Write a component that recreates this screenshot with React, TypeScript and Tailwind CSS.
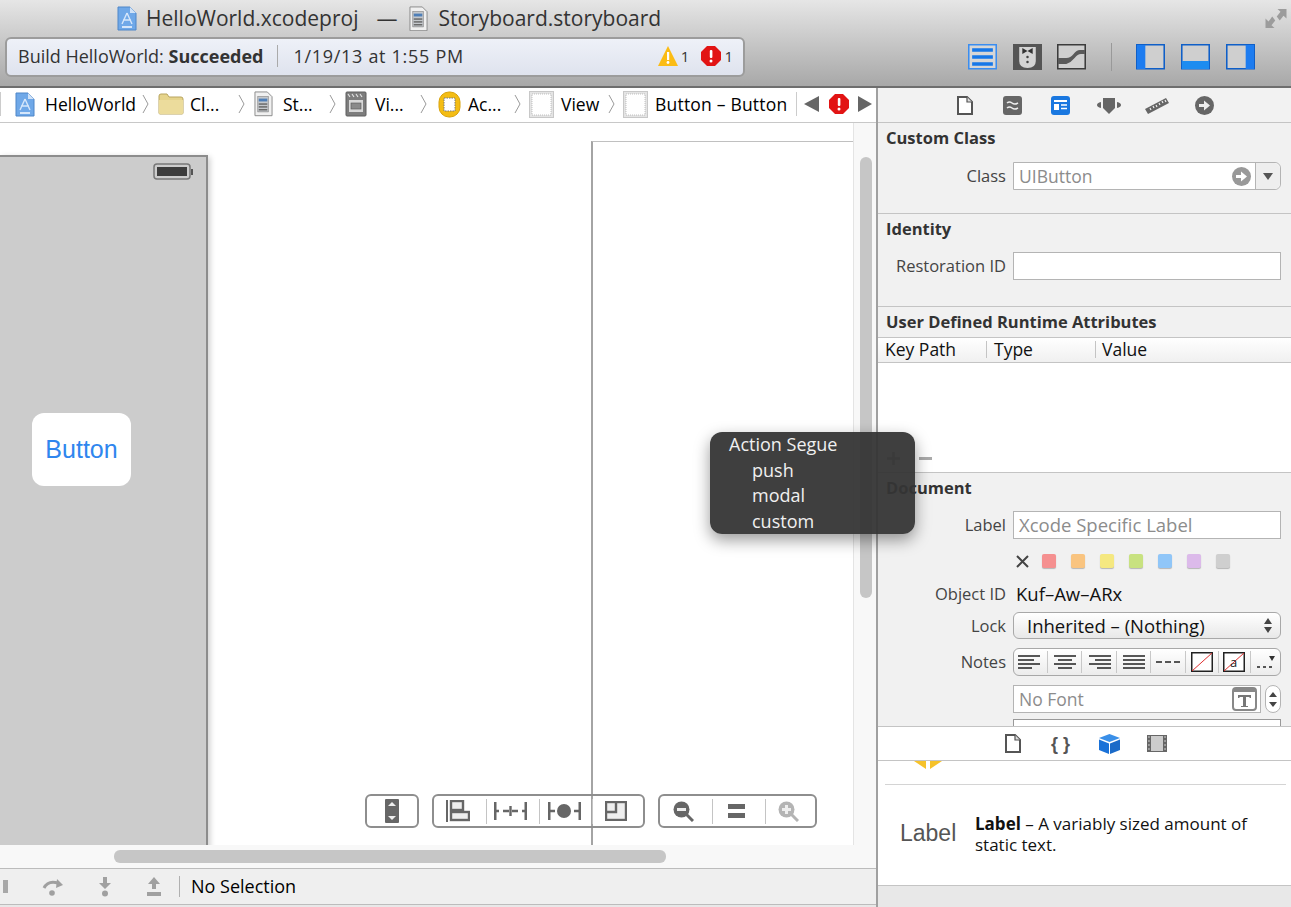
import React from "react"

// --- file type icons ---
function ProjIcon({ size = 20 }: { size?: number }) {
  return (
    <svg width={size} height={size * 1.25} viewBox="0 0 20 25" className="shrink-0">
      <path d="M1 1h12l6 6v17H1z" fill="#6fa8e8" stroke="#4f86c8" />
      <path d="M13 1v6h6z" fill="#cfe2f8" />
      <path d="M10 7l5 11M10 7l-5 11M6 14h8" stroke="#d5e6fa" strokeWidth="1.4" fill="none" />
      <rect x="5" y="20" width="10" height="2" fill="#d5e6fa" />
    </svg>
  )
}

function BoardIcon({ size = 20 }: { size?: number }) {
  return (
    <svg width={size} height={size * 1.35} viewBox="0 0 20 27" className="shrink-0">
      <path d="M1 1h13l5 5v20H1z" fill="#f0f0f0" stroke="#8a8a8a" />
      <rect x="4" y="6" width="11" height="16" fill="#c4c8cc" stroke="#777" strokeWidth=".6" />
      <rect x="5" y="8" width="9" height="3" fill="#4f7fb8" />
      <rect x="5" y="13" width="9" height="1.5" fill="#666" />
      <rect x="5" y="16" width="9" height="1.5" fill="#666" />
      <rect x="5" y="19" width="9" height="1.5" fill="#666" />
    </svg>
  )
}

function FolderIcon() {
  return (
    <svg width="26" height="22" viewBox="0 0 26 22" className="shrink-0">
      <path d="M1 5V3q0-2 2-2h6l2 3h12q2 0 2 2v14q0 1-1 1H2q-1 0-1-1z" fill="#e6d48c" stroke="#b8a45e" />
      <path d="M1 7h24v13q0 1-1 1H2q-1 0-1-1z" fill="#ecdc9c" />
    </svg>
  )
}

function SceneIcon() {
  return (
    <svg width="22" height="26" viewBox="0 0 22 26" className="shrink-0">
      <rect x="1" y="1" width="20" height="24" rx="1" fill="#7d7d7d" stroke="#5f5f5f" />
      <path d="M3 3l2 3M7 3l2 3M11 3l2 3M15 3l2 3" stroke="#e2e2e2" strokeWidth="1.2" />
      <rect x="4" y="9" width="14" height="12" fill="#d8d8d8" />
      <rect x="6" y="12" width="10" height="6" fill="#8a8a8a" stroke="#555" strokeWidth=".6" />
    </svg>
  )
}

function ControllerIcon() {
  return (
    <svg width="23" height="27" viewBox="0 0 23 27" className="shrink-0">
      <rect x="1" y="1" width="21" height="25" rx="10" fill="#f4bd14" stroke="#d9a30c" />
      <rect x="6" y="7" width="11" height="13" fill="#fff" stroke="#777" strokeDasharray="1.5 1" />
    </svg>
  )
}

function ViewIcon() {
  return (
    <svg width="25" height="27" viewBox="0 0 25 27" className="shrink-0">
      <rect x=".5" y=".5" width="24" height="26" fill="#e4e4e4" stroke="#c8c8c8" />
      <rect x="3" y="3" width="19" height="21" fill="#fff" stroke="#aaa" strokeWidth=".7" strokeDasharray="1 1" />
    </svg>
  )
}

function Chevron() {
  return (
    <svg width="7" height="20" viewBox="0 0 7 20" className="shrink-0">
      <path d="M1 1l5 9-5 9" stroke="#9a9a9a" fill="none" />
    </svg>
  )
}

function StopSign({ size = 20 }: { size?: number }) {
  return (
    <svg width={size} height={size} viewBox="0 0 20 20" className="shrink-0">
      <path d="M6 0h8l6 6v8l-6 6H6l-6-6V6z" fill="#e21414" />
      <rect x="8.8" y="4" width="2.6" height="8" rx="1" fill="#fff" />
      <circle cx="10" cy="15" r="1.5" fill="#fff" />
    </svg>
  )
}

function WarnSign() {
  return (
    <svg width="20" height="20" viewBox="0 0 20 20" className="shrink-0">
      <path d="M10 0l10 20H0z" fill="#fbbc14" />
      <rect x="9" y="6" width="2.2" height="8" fill="#fff" />
      <circle cx="10" cy="16.5" r="1.4" fill="#fff" />
    </svg>
  )
}

// --- window toolbar buttons ---
function EditorButtons() {
  return (
    <div className="flex items-center">
      <svg width="29" height="26" viewBox="0 0 28 26" preserveAspectRatio="none">
        <rect x=".75" y=".75" width="26.5" height="24" fill="#d6d6d6" stroke="#3a8df0" strokeWidth="1.5" />
        <path d="M4 6h20M4 13h20M4 20h20" stroke="#1677e8" strokeWidth="3.5" />
      </svg>
      <svg width="29" height="26" viewBox="0 0 28 26" preserveAspectRatio="none" className="ml-[16px]">
        <rect width="28" height="26" fill="#555" />
        <path d="M6 3h16v14q0 7-8 7t-8-7z" fill="#d4d4d4" />
        <path d="M9 4l5 3 5-3v6l-5-3-5 3z" fill="#333" />
        <circle cx="14" cy="13" r="1.2" fill="#444" />
        <circle cx="14" cy="18" r="1.2" fill="#444" />
      </svg>
      <svg width="29" height="26" viewBox="0 0 28 26" preserveAspectRatio="none" className="ml-[15px]">
        <rect x=".75" y=".75" width="26.5" height="24" fill="#cfcfcf" stroke="#3c3c3c" strokeWidth="1.5" />
        <path d="M1 14h8q4 0 7-4t6-4h5v4h-4q-3 0-6 4t-8 6H1z" fill="#5a5a5a" />
      </svg>
      <div className="ml-[25px] mr-[24px] h-[28px] w-px bg-[#999]" />
      <svg width="29" height="26" viewBox="0 0 28 26" preserveAspectRatio="none">
        <rect x=".75" y=".75" width="26.5" height="24" fill="#cfcfcf" stroke="#0f5fc8" strokeWidth="1.5" />
        <rect x="1" y="1" width="8" height="24" fill="#1d7cf0" />
      </svg>
      <svg width="29" height="26" viewBox="0 0 28 26" preserveAspectRatio="none" className="ml-[16px]">
        <rect x=".75" y=".75" width="26.5" height="24" fill="#cfcfcf" stroke="#0f5fc8" strokeWidth="1.5" />
        <rect x="1" y="17" width="26" height="8" fill="#1d8cf0" />
      </svg>
      <svg width="29" height="26" viewBox="0 0 28 26" preserveAspectRatio="none" className="ml-[16px]">
        <rect x=".75" y=".75" width="26.5" height="24" fill="#cfcfcf" stroke="#0f5fc8" strokeWidth="1.5" />
        <rect x="19" y="1" width="8" height="24" fill="#1d7cf0" />
      </svg>
    </div>
  )
}

function DocGlyph() {
  return (
    <svg width="16" height="19" viewBox="0 0 16 19">
      <path d="M1 1h9l5 5v12H1z" fill="#fff" stroke="#555" strokeWidth="2" />
      <path d="M10 1v5h5" fill="#ddd" stroke="#555" strokeWidth="1.2" />
    </svg>
  )
}

function InspectorTabs() {
  return (
    <div className="flex h-[35px] items-center border-b border-[#c4c4c4] bg-[#f2f2f2] pl-[79px]">
      <DocGlyph />
      <svg width="19" height="19" viewBox="0 0 19 19" className="ml-[30px]">
        <rect width="19" height="19" rx="3" fill="#666" />
        <path d="M4 7q2.500-2 5 0t6 0M4 12q2.500-2 5 0t6 0" stroke="#eee" strokeWidth="1.6" fill="none" />
      </svg>
      <svg width="19" height="19" viewBox="0 0 19 19" className="ml-[29px]">
        <rect width="19" height="19" rx="3" fill="#1a78e0" />
        <rect x="3" y="4" width="13" height="2" fill="#fff" />
        <rect x="3" y="8" width="5" height="6" fill="#fff" />
        <path d="M10 9h6M10 12.500h6" stroke="#fff" strokeWidth="1.5" />
      </svg>
      <svg width="26" height="19" viewBox="0 0 26 19" className="ml-[26px]">
        <path d="M7 2h12v10l-6 6-6-6z" fill="#666" />
        <path d="M5 6q-4 1-4 3t4 3zM21 6q4 1 4 3t-4 3z" fill="#666" />
      </svg>
      <svg width="26" height="19" viewBox="0 0 26 19" className="ml-[22px]">
        <path d="M1 13L22 2l3 5L4 18z" fill="#666" />
        <path d="M6 12l1 2M9 10l1 2M12 9l1 2M15 7l1 2M18 5l1 2M21 4l1 2" stroke="#eee" strokeWidth="1.2" />
      </svg>
      <svg width="19" height="19" viewBox="0 0 19 19" className="ml-[25px]">
        <circle cx="9.500" cy="9.500" r="9.500" fill="#666" />
        <path d="M4 8h5V4.500l6 5-6 5V11H4z" fill="#eee" />
      </svg>
    </div>
  )
}

// --- breadcrumb ---
function Breadcrumb() {
  return (
    <div className="flex h-[35px] items-center border-b border-[#c8c8c8] bg-white pb-[2px] text-black">
      <div className="h-[24px] w-px bg-[#ccc]" />
      <div className="ml-[14px]"><ProjIcon size={20} /></div>
      <span className="ml-[10px] w-[92px] whitespace-nowrap">HelloWorld</span>
      <div className="ml-[5px]"><Chevron /></div>
      <div className="ml-[9px]"><FolderIcon /></div>
      <span className="ml-[6px] w-[34px] whitespace-nowrap">Cl...</span>
      <div className="ml-[14px]"><Chevron /></div>
      <div className="ml-[9px]"><BoardIcon size={19} /></div>
      <span className="ml-[10px] w-[35px] whitespace-nowrap">St...</span>
      <div className="ml-[11px]"><Chevron /></div>
      <div className="ml-[9px]"><SceneIcon /></div>
      <span className="ml-[8px] w-[34px] whitespace-nowrap">Vi...</span>
      <div className="ml-[11px]"><Chevron /></div>
      <div className="ml-[11px]"><ControllerIcon /></div>
      <span className="ml-[7px] w-[36px] whitespace-nowrap">Ac...</span>
      <div className="ml-[10px]"><Chevron /></div>
      <div className="ml-[8px]"><ViewIcon /></div>
      <span className="ml-[7px] w-[40px] whitespace-nowrap">View</span>
      <div className="ml-[7px]"><Chevron /></div>
      <div className="ml-[8px]"><ViewIcon /></div>
      <span className="ml-[7px] w-[133px] whitespace-nowrap tracking-[0.2px]">Button – Button</span>
      <div className="ml-[8px] h-[24px] w-px bg-[#ccc]" />
      <svg width="15" height="16" viewBox="0 0 15 16" className="ml-[7px]"><path d="M15 0v16L0 8z" fill="#666" /></svg>
      <div className="ml-[10px]"><StopSign size={20} /></div>
      <svg width="14" height="16" viewBox="0 0 14 16" className="ml-[9px]"><path d="M0 0v16l14-8z" fill="#666" /></svg>
    </div>
  )
}

// --- canvas bottom controls ---
function CanvasControls() {
  const group = "flex h-[34px] items-center rounded-md border-2 border-[#8e8e8e]"
  const sep = "h-[25px] w-px bg-[#c4c4c4]"
  return (
    <div className="absolute left-[365px] top-[671px] flex">
      <div className={`${group} w-[54px] justify-center`}>
        <svg width="14" height="24" viewBox="0 0 14 24">
          <rect width="14" height="24" rx="1" fill="#666" />
          <path d="M7 3l4 4H3zM7 21l4-4H3z" fill="#eee" />
        </svg>
      </div>
      <div className={`${group} ml-[13px] w-[213px]`}>
        <div className="flex w-[52px] justify-center pr-[4px]">
          <svg width="24" height="22" viewBox="0 0 24 22">
            <path d="M1 0v22" stroke="#666" strokeWidth="2" />
            <rect x="5" y="1" width="12" height="9" fill="#eee" stroke="#666" strokeWidth="2.400" />
            <rect x="5" y="12" width="18" height="8" fill="#eee" stroke="#666" strokeWidth="2.400" />
          </svg>
        </div>
        <div className={sep} />
        <div className="flex w-[52px] justify-center pr-[5px]">
          <svg width="33" height="18" viewBox="0 0 33 18">
            <path d="M1 0v18M32 0v18" stroke="#666" strokeWidth="3" />
            <path d="M1 9h4M9 9h6M18 9h6M28 9h4M16.500 4v10" stroke="#666" strokeWidth="2.400" />
          </svg>
        </div>
        <div className={sep} />
        <div className="flex w-[52px] justify-center pr-[4px]">
          <svg width="33" height="18" viewBox="0 0 33 18">
            <path d="M1 0v18M32 0v18" stroke="#666" strokeWidth="3" />
            <path d="M1 9h6M26 9h6" stroke="#666" strokeWidth="2.400" />
            <circle cx="16" cy="9" r="7" fill="#666" />
          </svg>
        </div>
        <div className={sep} />
        <div className="flex flex-1 justify-center pr-[4px]">
          <svg width="22" height="20" viewBox="0 0 22 20">
            <rect x="1" y="1" width="20" height="18" fill="#eee" stroke="#666" strokeWidth="2.400" />
            <path d="M2 11h9V2" fill="none" stroke="#666" strokeWidth="2.400" />
          </svg>
        </div>
      </div>
      <div className={`${group} ml-[13px] w-[159px]`}>
        <div className="flex w-[52px] justify-center pr-[5px]">
          <svg width="21" height="21" viewBox="0 0 21 21">
            <circle cx="8.500" cy="8.500" r="8" fill="#666" />
            <rect x="4" y="7" width="9" height="3" fill="#eee" />
            <path d="M13 13l7 7" stroke="#666" strokeWidth="3" />
          </svg>
        </div>
        <div className={sep} />
        <div className="flex w-[52px] justify-center pr-[5px]">
          <svg width="17" height="14" viewBox="0 0 17 14">
            <rect width="17" height="5" fill="#666" />
            <rect y="9" width="17" height="5" fill="#666" />
          </svg>
        </div>
        <div className={sep} />
        <div className="flex flex-1 justify-center pr-[4px]">
          <svg width="21" height="21" viewBox="0 0 21 21">
            <circle cx="8.500" cy="8.500" r="8" fill="#b4b4b4" />
            <path d="M4 8.500h9M8.500 4v9" stroke="#eee" strokeWidth="3" />
            <path d="M13 13l7 7" stroke="#b4b4b4" strokeWidth="3" />
          </svg>
        </div>
      </div>
    </div>
  )
}

// --- storyboard ---
function Canvas() {
  return (
    <div className="relative h-[745px] overflow-hidden bg-[#f8f8f8]">
      <div className="relative h-[722px] w-[854px] overflow-hidden border-r border-[#e4e4e4] bg-white">
        <div className="absolute left-0 top-[32px] h-[700px] w-[208px] border-r-2 border-t-2 border-[#8c8c8c] bg-[#cccccc] shadow-[2px_2px_6px_rgba(0,0,0,0.2)]">
          <svg width="40" height="17" viewBox="0 0 40 17" className="absolute left-[153px] top-[6px]">
            <rect x="1" y="1" width="36" height="15" rx="3" fill="none" stroke="#777" strokeWidth="1.5" />
            <rect x="4" y="4" width="30" height="9" fill="#3c3c3c" />
            <rect x="38" y="6" width="2" height="6" fill="#555" />
          </svg>
          <div className="absolute left-[32px] top-[256px] flex h-[73px] w-[99px] items-center justify-center rounded-xl bg-white font-['Liberation_Sans',sans-serif] text-[25px] text-[#2f86ee]">
            Button
          </div>
        </div>
        <div className="absolute left-[591px] top-[18px] h-[710px] w-[263px] border-l-2 border-t border-l-[#a4a4a4] border-t-[#c0c0c0] bg-white" />
        <CanvasControls />
      </div>
      <div className="absolute left-[860px] top-[34px] h-[441px] w-[12px] rounded-md bg-[#c6c6c6]" />
      <div className="absolute left-[114px] top-[727px] h-[13px] w-[552px] rounded-md bg-[#c6c6c6]" />
    </div>
  )
}

function DebugBar() {
  return (
    <div className="flex h-[37px] items-center border-y border-[#bcbcbc] bg-[#efefef] text-[18px] text-black">
      <div className="ml-[3px] h-[13px] w-[5px] bg-[#a8a8a8]" />
      <svg width="22" height="18" viewBox="0 0 22 18" className="ml-[34px]">
        <path d="M2 10q4-8 14-5" stroke="#a0a0a0" strokeWidth="3" fill="none" />
        <path d="M15 1l6 6-7 3z" fill="#a0a0a0" />
        <circle cx="10" cy="15" r="2.800" fill="#a0a0a0" />
      </svg>
      <svg width="14" height="20" viewBox="0 0 14 20" className="ml-[34px]">
        <path d="M5 0h4v6h4l-6 6-6-6h4z" fill="#a0a0a0" />
        <circle cx="7" cy="16.500" r="3" fill="#a0a0a0" />
      </svg>
      <svg width="14" height="20" viewBox="0 0 14 20" className="ml-[35px]">
        <path d="M7 0l6 7H9v5H5V7H1z" fill="#a0a0a0" />
        <rect y="15" width="14" height="4" fill="#a0a0a0" />
      </svg>
      <div className="ml-[18px] h-[21px] w-px bg-[#b0b0b0]" />
      <span className="ml-[11px]">No Selection</span>
    </div>
  )
}

// --- inspector ---
function Row({ label, top, children }: { label: string; top: number; children: React.ReactNode }) {
  return (
    <div className="flex items-center" style={{ marginTop: top }}>
      <div className="w-[128px] whitespace-nowrap text-right text-[16.500px] leading-[20px] text-[#444]">{label}</div>
      <div className="ml-[7px] w-[268px]">{children}</div>
    </div>
  )
}

function Heading({ children }: { children: React.ReactNode }) {
  return <div className="whitespace-nowrap px-[8px] text-[16.500px] font-bold leading-[30px] text-[#333]">{children}</div>
}

const swatches = ["bg-[#f59090]", "bg-[#f9c480]", "bg-[#f5e880]", "bg-[#c8e280]", "bg-[#90c6f8]", "bg-[#dcbaea]", "bg-[#cfcfcf]"]

function NotesControl() {
  const sep = "h-[22px] w-px bg-[#c8c8c8]"
  const lines = (d: string) => (
    <svg width="24" height="14" viewBox="0 0 24 14">
      <path d={d} stroke="#222" strokeWidth="1.5" />
    </svg>
  )
  return (
    <div className="flex h-[28px] items-center justify-between rounded-md border border-[#a8a8a8] bg-gradient-to-b from-white to-[#ececec] px-[4px]">
      {lines("M0 1h22M0 5h16M0 9h22M0 13h14")}
      <div className={sep} />
      {lines("M1 1h22M5 5h14M1 9h22M5 13h14")}
      <div className={sep} />
      {lines("M2 1h22M8 5h16M2 9h22M10 13h14")}
      <div className={sep} />
      {lines("M1 1h22M1 5h22M1 9h22M1 13h22")}
      <div className={sep} />
      {lines("M0 7h6M9 7h6M18 7h6")}
      <div className={sep} />
      <svg width="22" height="20" viewBox="0 0 22 20">
        <rect x=".75" y=".75" width="20.500" height="18.500" fill="#fff" stroke="#222" strokeWidth="1.5" />
        <path d="M1 19L21 1" stroke="#e03030" />
      </svg>
      <div className={sep} />
      <svg width="22" height="20" viewBox="0 0 22 20">
        <rect x=".75" y=".75" width="20.500" height="18.500" fill="#fff" stroke="#222" strokeWidth="1.5" />
        <path d="M1 19L21 1" stroke="#e03030" />
        <text x="7" y="15" fontSize="13" fill="#222">a</text>
      </svg>
      <div className={sep} />
      <svg width="20" height="16" viewBox="0 0 20 16">
        <path d="M1 13h3M7 13h3M13 13h3" stroke="#555" strokeWidth="2" />
        <path d="M13 2h6l-3 5z" fill="#333" />
      </svg>
    </div>
  )
}

function Inspector() {
  const field = "h-[28px] border border-[#b4b4b4] bg-white"
  return (
    <div className="h-[638px] overflow-hidden">
      <InspectorTabs />
      <div className="h-[91px] border-b border-[#c4c4c4] bg-[#f1f1f1]">
        <Heading>Custom Class</Heading>
        <Row label="Class" top={9}>
          <div className={`${field} flex items-center rounded-r-md pl-[5px] text-[#8c8c8c]`}>
            <span className="flex-1">UIButton</span>
            <svg width="19" height="19" viewBox="0 0 19 19">
              <circle cx="9.500" cy="9.500" r="9.500" fill="#999" />
              <path d="M4 8h5V4.500l6 5-6 5V11H4z" fill="#fff" />
            </svg>
            <div className="ml-[4px] flex h-full w-[25px] items-center justify-center rounded-r-md border-l border-[#b4b4b4] bg-[#eeeeee]">
              <svg width="10" height="7" viewBox="0 0 10 7"><path d="M0 0h10L5 7z" fill="#555" /></svg>
            </div>
          </div>
        </Row>
      </div>
      <div className="h-[93px] border-b border-[#c4c4c4] bg-[#f1f1f1]">
        <Heading>Identity</Heading>
        <Row label="Restoration ID" top={8}>
          <div className={field} />
        </Row>
      </div>
      <div className="h-[166px] border-b border-[#c4c4c4] bg-white">
        <div className="border-b border-[#c4c4c4] bg-[#f1f1f1]"><Heading>User Defined Runtime Attributes</Heading></div>
        <div className="flex h-[25px] items-center border-b border-[#c4c4c4] bg-gradient-to-b from-white to-[#f0f0f0] pb-[2px] text-[#111]">
          <span className="w-[108px] whitespace-nowrap pl-[7px]">Key Path</span>
          <span className="w-[109px] border-l border-[#c4c4c4] pl-[7px] leading-[17px]">Type</span>
          <span className="border-l border-[#c4c4c4] pl-[6px] leading-[17px]">Value</span>
        </div>
        <div className="flex h-[109px] items-end pb-[7px] pl-[9px]">
          <svg width="13" height="13" viewBox="0 0 13 13"><path d="M6.500 0v13M0 6.500h13" stroke="#999" strokeWidth="2.500" /></svg>
          <div className="mb-[5px] ml-[19px] h-[3px] w-[13px] bg-[#aaa]" />
        </div>
      </div>
      <div className="bg-[#f1f1f1]">
        <Heading>Document</Heading>
        <Row label="Label" top={8}>
          <div className={`${field} whitespace-nowrap pl-[5px] text-[18.500px] leading-[26px] text-[#8c8c8c]`}>Xcode Specific Label</div>
        </Row>
        <div className="mt-[15px] flex h-[14px] items-center pl-[138px]">
          <svg width="13" height="13" viewBox="0 0 13 13"><path d="M1 1l11 11M12 1L1 12" stroke="#444" strokeWidth="2" /></svg>
          <div className="ml-[13px] flex gap-[15px]">
            {swatches.map((c) => (
              <div key={c} className={`h-[14px] w-[14px] rounded-[2px] shadow-[0_1px_1px_rgba(0,0,0,0.25)] ${c}`} />
            ))}
          </div>
        </div>
        <Row label="Object ID" top={14}>
          <div className="pl-[3px] text-[18.500px] leading-[23px] text-[#111]">Kuf–Aw–ARx</div>
        </Row>
        <Row label="Lock" top={7}>
          <div className="flex h-[27px] items-center justify-between rounded-md border border-[#a8a8a8] bg-gradient-to-b from-white to-[#e8e8e8] pl-[13px] pr-[8px] text-[18.500px] leading-[24px] text-[#111]">
            <span className="whitespace-nowrap">Inherited – (Nothing)</span>
            <svg width="8" height="15" viewBox="0 0 8 15"><path d="M4 0l4 6H0zM4 15l4-6H0z" fill="#444" /></svg>
          </div>
        </Row>
        <Row label="Notes" top={9}>
          <NotesControl />
        </Row>
        <div className="mt-[9px] flex pl-[135px]">
          <div className={`${field} flex w-[248px] items-center justify-between pl-[5px] pr-[3px] text-[#8c8c8c]`}>
            <span>No Font</span>
            <svg width="25" height="24" viewBox="0 0 25 24">
              <rect x="1" y="1" width="23" height="22" rx="3" fill="#fff" stroke="#888" strokeWidth="2" />
              <rect x="1" y="1" width="23" height="4" fill="#888" />
              <path d="M6 8h13v3h-1l-1-1h-3v9h2v1H9v-1h2v-9H8l-1 1H6z" fill="#777" />
            </svg>
          </div>
          <div className="ml-[4px] flex h-[28px] w-[16px] flex-col items-center justify-center gap-[5px] rounded-full border border-[#b4b4b4] bg-white">
            <svg width="8" height="5" viewBox="0 0 8 5"><path d="M4 0l4 5H0z" fill="#444" /></svg>
            <svg width="8" height="5" viewBox="0 0 8 5"><path d="M0 0h8L4 5z" fill="#444" /></svg>
          </div>
        </div>
        <div className="ml-[135px] mt-[6px] h-[28px] w-[268px] border border-[#999] bg-white" />
      </div>
    </div>
  )
}

function Library() {
  return (
    <div className="h-[181px] bg-white">
      <div className="flex h-[35px] items-center border-y border-[#c4c4c4] pl-[127px]">
        <DocGlyph />
        <span className="ml-[30px] w-[19px] whitespace-nowrap text-center font-['Liberation_Sans',sans-serif] text-[18px] font-bold leading-none text-[#555]">{"{ }"}</span>
        <svg width="21" height="20" viewBox="0 0 21 20" className="ml-[29px]">
          <path d="M10.500 0L21 4 10.500 8 0 4z" fill="#3a8fe8" />
          <path d="M0 5.500l10 4V20L0 16z" fill="#1a72d8" />
          <path d="M21 5.500l-10 4V20l10-4z" fill="#1a6ac8" />
        </svg>
        <svg width="20" height="17" viewBox="0 0 20 17" className="ml-[27px]">
          <rect width="20" height="17" fill="#666" />
          <rect x="4" y="1" width="12" height="15" fill="#ccc" />
          <path d="M1.200 2h1.500M1.200 6h1.500M1.200 10h1.500M1.200 14h1.500M17.300 2h1.500M17.300 6h1.500M17.300 10h1.500M17.300 14h1.500" stroke="#eee" />
        </svg>
      </div>
      <div className="h-[124px] overflow-hidden">
        <svg width="28" height="8" viewBox="0 0 28 8" className="ml-[36px] block">
          <path d="M0 0h12v8zM28 0H16v8z" fill="#f6c22a" />
        </svg>
        <div className="ml-[7px] mt-[15px] h-px w-[401px] bg-[#d4d4d4]" />
        <div className="flex pl-[22px] pt-[28px]">
          <div className="w-[75px] pt-[7px] font-['Liberation_Sans',sans-serif] text-[23px] leading-[26px] text-[#555]">Label</div>
          <div className="w-[285px] text-[17px] leading-[21px] text-[#111]">
            <span className="font-bold">Label</span> – A variably sized amount of static text.
          </div>
        </div>
      </div>
      <div className="h-[22px] border-t border-[#c4c4c4] bg-[#e8e8e8]" />
    </div>
  )
}

export default function App() {
  return (
    <div className="relative h-[907px] w-[1291px] overflow-hidden bg-white font-['Open_Sans','Noto_Sans',sans-serif] text-[17.500px]">
      {/* window toolbar */}
      <div className="h-[88px] border-b-2 border-[#6e6e6e] bg-gradient-to-b from-[#e6e6e6] to-[#a8a8a8] pl-[5px] pr-[3px]">
        <div className="flex h-[37px] items-center pl-[112px] text-[21px] text-[#333]">
          <ProjIcon size={20} />
          <span className="ml-[9px] whitespace-nowrap">HelloWorld.xcodeproj</span>
          <span className="ml-[18px]">—</span>
          <div className="ml-[12px]"><BoardIcon size={19} /></div>
          <span className="ml-[10px] whitespace-nowrap">Storyboard.storyboard</span>
          <svg width="24" height="23" viewBox="0 0 32 24" preserveAspectRatio="none" className="ml-auto">
            <path d="M18 2h12v10l-4-3-5 5-4-4 5-5zM2 22V12l4 3 5-5 4 4-5 5 4 3z" fill="#9c9c9c" />
          </svg>
        </div>
        <div className="flex items-center">
          <div className="flex h-[40px] w-[740px] items-center rounded-md border-2 border-[#9c9c9c] bg-gradient-to-b from-[#eef1f8] to-[#dfe3ee] pb-[2px] pl-[11px] pr-[10px] text-[18px] text-[#333]">
            <span className="whitespace-nowrap">Build HelloWorld: <span className="font-bold">Succeeded</span></span>
            <div className="ml-[14px] h-[22px] w-px bg-[#aaa]" />
            <span className="ml-[15px] whitespace-nowrap tracking-[0.7px]">1/19/13 at 1:55 PM</span>
            <div className="ml-auto"><WarnSign /></div>
            <span className="ml-[3px] text-[15px]">1</span>
            <div className="ml-[12px]"><StopSign size={20} /></div>
            <span className="ml-[3px] text-[15px]">1</span>
          </div>
          <div className="ml-[223px]"><EditorButtons /></div>
        </div>
      </div>

      <div className="flex">
        <div className="h-[819px] w-[878px] border-r-2 border-[#a0a0a0] bg-[#e8e8e8]">
          <Breadcrumb />
          <Canvas />
          <DebugBar />
        </div>
        <div className="w-[413px]">
          <Inspector />
          <Library />
        </div>
      </div>

      {/* segue picker, floats over canvas and inspector */}
      <div className="absolute left-[710px] top-[432px] h-[102px] w-[205px] rounded-xl bg-[#353535]/95 pl-[19px] text-[18px] text-[#f0f0f0] shadow-[0_6px_16px_rgba(0,0,0,0.4)]">
        <div className="leading-[25.500px]">Action Segue</div>
        <div className="pl-[23px] leading-[25.500px]">push</div>
        <div className="pl-[23px] leading-[25.500px]">modal</div>
        <div className="pl-[23px] leading-[25.500px]">custom</div>
      </div>
    </div>
  )
}
